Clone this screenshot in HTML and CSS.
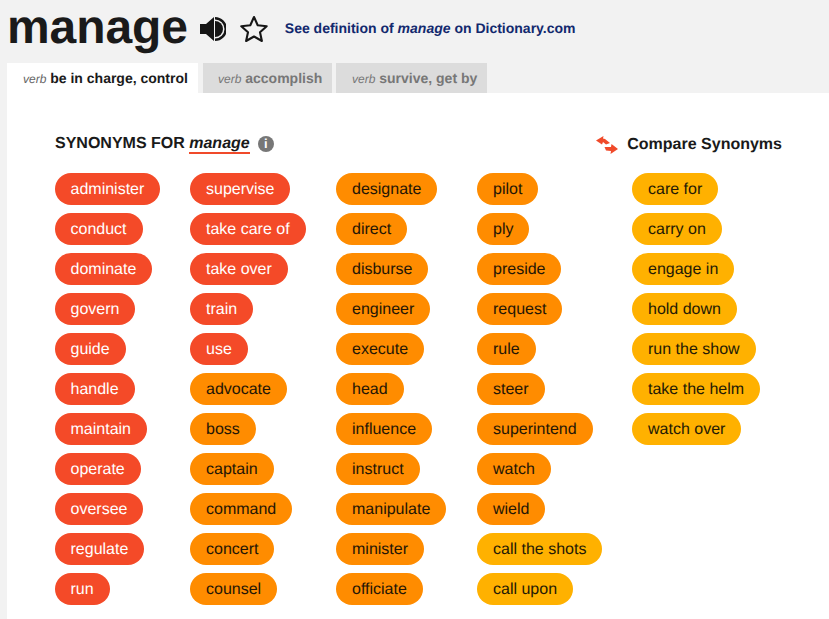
FILE: index.html
```html
<!DOCTYPE html>
<html lang="en">
<head>
<meta charset="utf-8">
<title>manage</title>
<link rel="stylesheet" href="styles.css">
</head>
<body>
<header class="head">
  <h1 class="word">manage</h1>
  <svg class="speaker" viewBox="0 0 26 24" width="26" height="24"><path d="M0 7h6l8-7v24l-8-7H0z" fill="#161616"/><path d="M15 0a12 12 0 0 1 0 24v-2.500a9.500 9.500 0 0 0 0-19z" fill="#161616"/><path d="M15 4a8 8 0 0 1 0 16z" fill="#161616"/></svg>
  <svg class="star" viewBox="0 0 28 28" width="28" height="28"><path d="M14 2l3.700 8.200 9 1-6.700 6 1.900 8.800-7.900-4.500-7.900 4.500L8 17.200l-6.700-6 9-1z" fill="none" stroke="#161616" stroke-width="2.100" stroke-linejoin="round"/></svg>
  <a class="deflink" href="#">See definition of <em>manage</em> on Dictionary.com</a>
</header>
<nav class="tabs">
  <a class="tab active" href="#"><i>verb</i> <b>be in charge, control</b></a>
  <a class="tab t2" href="#"><i>verb</i> <b>accomplish</b></a>
  <a class="tab t3" href="#"><i>verb</i> <b>survive, get by</b></a>
</nav>
<main class="panel">
  <div class="titlebar">
    <h2 class="syn-title">SYNONYMS FOR <em>manage</em><span class="info">i</span></h2>
    <div class="compare">
      <svg viewBox="0 0 22 18" width="22" height="18"><path d="M0 4.500L7.500 0l-.5 2.500 2 .5 5 4-4 1.500-3-2.500-1 2.500z" fill="#f04a2a"/><path d="M22 13l-7.500 5 .5-3-5-.5-1.500-3.500 6.500 0 .5-3z" fill="#f04a2a"/></svg>
      <span>Compare Synonyms</span>
    </div>
  </div>
  <div class="cols">
    <ul class="col c1">
      <li class="pill red">administer</li><li class="pill red">conduct</li><li class="pill red">dominate</li><li class="pill red">govern</li><li class="pill red">guide</li><li class="pill red">handle</li><li class="pill red">maintain</li><li class="pill red">operate</li><li class="pill red">oversee</li><li class="pill red">regulate</li><li class="pill red">run</li>
    </ul>
    <ul class="col c2">
      <li class="pill red">supervise</li><li class="pill red">take care of</li><li class="pill red">take over</li><li class="pill red">train</li><li class="pill red">use</li><li class="pill orange">advocate</li><li class="pill orange">boss</li><li class="pill orange">captain</li><li class="pill orange">command</li><li class="pill orange">concert</li><li class="pill orange">counsel</li>
    </ul>
    <ul class="col c3">
      <li class="pill orange">designate</li><li class="pill orange">direct</li><li class="pill orange">disburse</li><li class="pill orange">engineer</li><li class="pill orange">execute</li><li class="pill orange">head</li><li class="pill orange">influence</li><li class="pill orange">instruct</li><li class="pill orange">manipulate</li><li class="pill orange">minister</li><li class="pill orange">officiate</li>
    </ul>
    <ul class="col c4">
      <li class="pill orange">pilot</li><li class="pill orange">ply</li><li class="pill orange">preside</li><li class="pill orange">request</li><li class="pill orange">rule</li><li class="pill orange">steer</li><li class="pill orange">superintend</li><li class="pill orange">watch</li><li class="pill orange">wield</li><li class="pill yellow">call the shots</li><li class="pill yellow">call upon</li>
    </ul>
    <ul class="col c5">
      <li class="pill yellow">care for</li><li class="pill yellow">carry on</li><li class="pill yellow">engage in</li><li class="pill yellow">hold down</li><li class="pill yellow">run the show</li><li class="pill yellow">take the helm</li><li class="pill yellow">watch over</li>
    </ul>
  </div>
</main>
</body>
</html>
```
FILE: styles.css
```css
* { box-sizing: border-box; }
html, body { margin: 0; height: 100%; }
body {
  width: 829px;
  height: 619px;
  overflow: hidden;
  background: #f2f2f2;
  font-family: "Liberation Sans", Arial, sans-serif;
  color: #1a1a1a;
  text-rendering: geometricPrecision;
}
.head {
  display: flex;
  align-items: center;
  height: 63px;
  padding: 0 0 7px 7px;
}
.word {
  margin: 0;
  font-size: 48px;
  line-height: 56px;
  font-weight: 700;
  letter-spacing: -0.1px;
}
.speaker { margin-left: 12px; margin-top: 2px; }
.star { margin-left: 14px; margin-top: 1px; }
.deflink {
  margin-left: 17px;
  font-size: 14px;
  font-weight: 700;
  color: #12296e;
  text-decoration: none;
}
.deflink em { font-style: italic; }
.tabs {
  display: flex;
  height: 30px;
  padding-left: 7px;
}
.tab {
  display: block;
  height: 30px;
  line-height: 31px;
  padding: 0 10px 0 16px;
  background: #dcdcdc;
  color: #777;
  font-size: 14px;
  text-decoration: none;
  white-space: nowrap;
}
.tab i { font-size: 12px; }
.tab.active { background: #fff; color: #1a1a1a; width: 191px; }
.tab.active i { color: #666; }
.t2 { margin-left: 5px; width: 129px; padding-left: 15px; }
.t3 { margin-left: 4px; width: 151px; padding-left: 16px; }
.panel {
  margin-left: 7px;
  height: 526px;
  background: #fff;
  padding: 0 0 0 48px;
}
.titlebar {
  display: flex;
  justify-content: space-between;
  height: 80px;
  padding-top: 41px;
}
.syn-title {
  margin: 0;
  font-size: 16px;
  line-height: 20px;
  font-weight: 700;
}
.syn-title em { border-bottom: 2px solid #f04a2a; }
.info {
  display: inline-block;
  width: 16px;
  height: 16px;
  margin-left: 8px;
  border-radius: 50%;
  background: #777;
  color: #fff;
  font-size: 13px;
  line-height: 16px;
  text-align: center;
  vertical-align: 0;
}
.compare {
  display: flex;
  align-items: center;
  gap: 9px;
  height: 22px;
  margin-right: 47px;
  font-size: 16px;
  font-weight: 700;
}
.cols { display: flex; }
.col {
  list-style: none;
  margin: 0;
  padding: 0;
  display: flex;
  flex-direction: column;
  align-items: flex-start;
  gap: 8px;
}
.c1 { width: 135px; }
.c2 { width: 146px; }
.c3 { width: 141px; }
.c4 { width: 155px; }
.pill {
  height: 32px;
  line-height: 33px;
  padding: 0 16px;
  border-radius: 16px;
  font-size: 16px;
  white-space: nowrap;
}
.c1 .pill { padding-left: 15.500px; }
.red { background: #f44a28; color: #fff; }
.orange { background: #ff8c00; color: #241606; }
.yellow { background: #ffb100; color: #241a06; }
```
